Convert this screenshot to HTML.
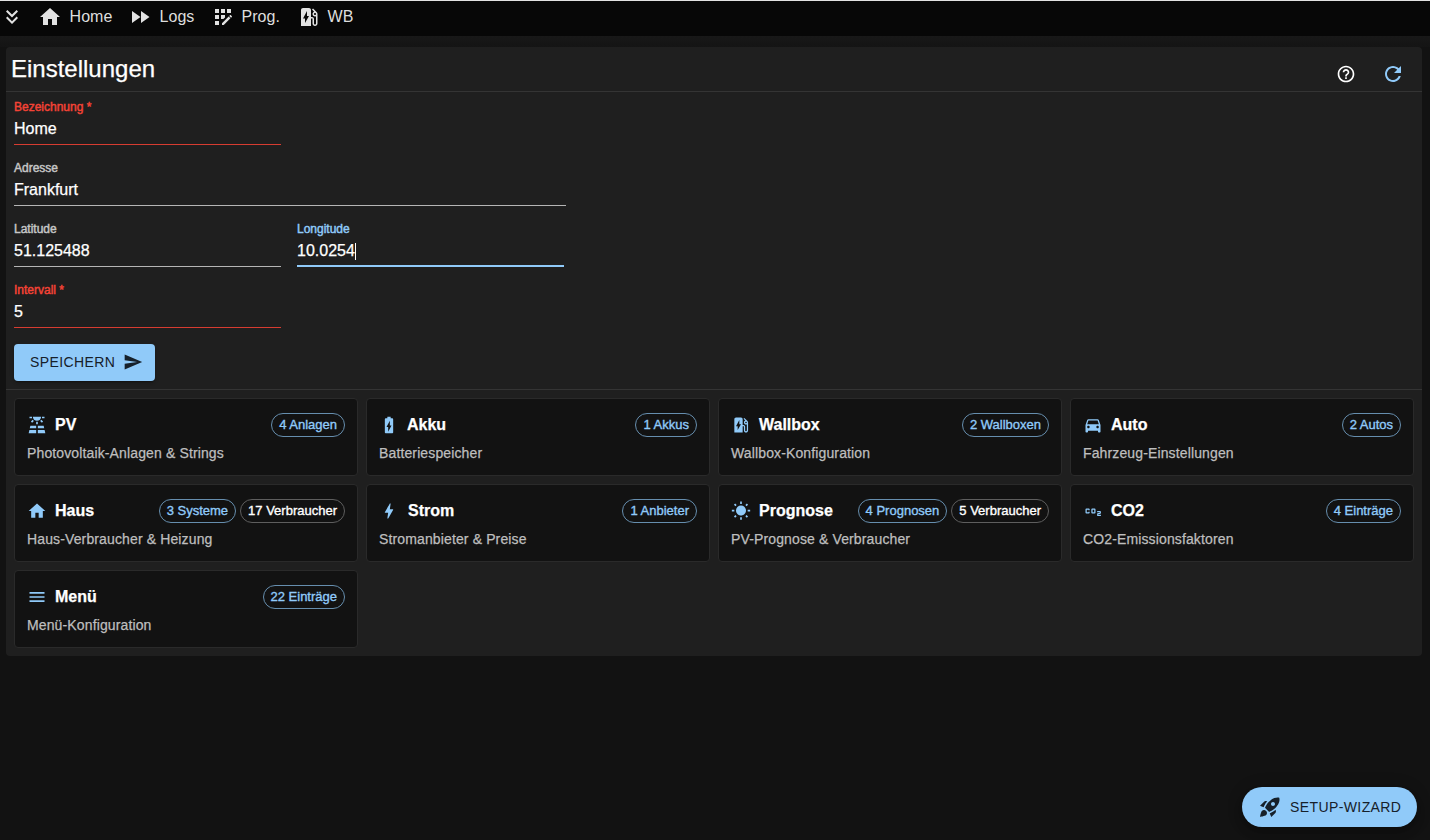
<!DOCTYPE html>
<html lang="de">
<head>
<meta charset="utf-8">
<title>Einstellungen</title>
<style>
*{box-sizing:border-box;margin:0;padding:0}
html,body{width:1430px;height:840px;overflow:hidden}
body{background:#121212;color:#fff;-webkit-text-stroke:.25px currentColor;font-family:"Liberation Sans",Arial,sans-serif;position:relative}
svg{display:block;fill:currentColor}
.abs{position:absolute}
/* nav */
#nav{left:0;top:0;width:1430px;height:36px;background:#070707;border-top:1px solid #e2e2e2}
#strip{left:0;top:36px;width:1430px;height:11px;background:linear-gradient(to bottom,#181818,#141414)}
#nav .ic{position:absolute;top:4px;width:24px;height:24px;color:#e2e2e2}
#nav .tx{position:absolute;top:7px;-webkit-text-stroke:0;margin-left:.6px;font-size:16px;line-height:18px;color:#dedede;white-space:nowrap}
/* panel */
#panel{left:6px;top:47px;width:1416px;height:609px;background:#1f1f1f;border-radius:4px}
h1{position:absolute;left:5px;top:8px;font-size:24px;font-weight:400;line-height:28px;color:#fff;white-space:nowrap}
.hr{position:absolute;left:0;width:1416px;height:1px;background:#343434}
.lbl{position:absolute;-webkit-text-stroke:.45px currentColor;font-size:12px;line-height:14px;color:#c6c6c6;white-space:nowrap}
.val{position:absolute;font-size:16px;line-height:18px;color:#fff;white-space:nowrap}
.ul{position:absolute;height:1px;background:#b5b5b5}
.err{color:#f44336}
.ul.err{background:#d63c31}
.foc{color:#90caf9}
.ul.foc{background:#90caf9;height:2px}
#save{left:8px;top:297px;width:141px;height:37px;background:#90caf9;border-radius:4px;color:#16202a;box-shadow:0 3px 1px -2px rgba(0,0,0,.2),0 2px 2px 0 rgba(0,0,0,.14),0 1px 5px 0 rgba(0,0,0,.12)}
#save span{-webkit-text-stroke:0;position:absolute;left:16px;top:10px;font-size:14px;line-height:16px;letter-spacing:.4px;white-space:nowrap}
#save svg{position:absolute;left:109px;top:8px;width:20px;height:20px}
/* cards */
.card{position:absolute;width:344px;height:78px;background:#121212;border:1px solid #2a2a2a;border-radius:4px}
.card .ci{position:absolute;left:12px;top:16px;width:20px;height:20px;color:#90caf9}
.card .ct{position:absolute;left:40px;top:16px;font-size:16px;font-weight:700;line-height:20px;color:#fff;white-space:nowrap}
.card .cd{position:absolute;left:12px;top:46px;font-size:14px;letter-spacing:.13px;line-height:16px;color:#bebebe;white-space:nowrap}
.chips{position:absolute;right:12px;top:14px;display:flex;gap:4px}
.chip{height:24px;border:1px solid #668eae;-webkit-text-stroke:.35px currentColor;border-radius:12px;padding:0 7px;font-size:13px;line-height:22px;color:#90caf9;white-space:nowrap}
.chip.w{border-color:#5e5e5e;color:#fff}
/* fab */
#fab{left:1242px;top:787px;width:175px;height:40px;background:#90caf9;border-radius:20px;color:#16202a;box-shadow:0 3px 5px -1px rgba(0,0,0,.2),0 6px 10px 0 rgba(0,0,0,.14),0 1px 18px 0 rgba(0,0,0,.12)}
#fab svg{position:absolute;left:16px;top:8px;width:24px;height:24px}
#fab span{-webkit-text-stroke:0;position:absolute;left:48px;top:12px;font-size:14px;line-height:16px;letter-spacing:.4px;white-space:nowrap}
</style>
</head>
<body>
<div id="nav" class="abs">
  <svg class="ic" style="left:0" viewBox="0 0 24 24"><path d="M18 6.41 16.59 5 12 9.58 7.41 5 6 6.41l6 6z"/><path d="m18 13-1.41-1.41L12 16.17l-4.59-4.58L6 13l6 6z"/></svg>
  <svg class="ic" style="left:38px" viewBox="0 0 24 24"><path d="M10 20v-6h4v6h5v-8h3L12 3 2 12h3v8z"/></svg>
  <span class="tx" style="left:69px">Home</span>
  <svg class="ic" style="left:128px" viewBox="0 0 24 24"><path d="M4 18l8.500-6L4 6v12zm9-12v12l8.500-6L13 6z"/></svg>
  <span class="tx" style="left:159px">Logs</span>
  <svg class="ic" style="left:211px" viewBox="0 0 24 24"><path d="M10 4h4v4h-4zM4 16h4v4H4zm0-6h4v4H4zm0-6h4v4H4zm10 8.420V10h-4v4h2.420zm6.880-1.130-1.170-1.170c-.16-.16-.42-.16-.58 0l-.88.88L20 12.760l.88-.88c.16-.16.16-.42 0-.59zM11 18.250V20h1.750l6.670-6.660-1.750-1.760zM16 4h4v4h-4z"/></svg>
  <span class="tx" style="left:241px">Prog.</span>
  <svg class="ic" style="left:297px" viewBox="0 0 24 24"><path d="M19.770 7.230l.01-.01-3.720-3.720L15 4.560l2.110 2.110c-.94.36-1.610 1.260-1.610 2.330 0 1.380 1.120 2.500 2.500 2.500.36 0 .69-.08 1-.21v7.210c0 .55-.45 1-1 1s-1-.45-1-1V14c0-1.100-.9-2-2-2h-1V5c0-1.100-.9-2-2-2H6c-1.100 0-2 .9-2 2v16h10v-7.500h1.500v5c0 1.380 1.120 2.500 2.500 2.500s2.500-1.120 2.500-2.500V9c0-.69-.28-1.320-.73-1.770zM18 10c-.55 0-1-.45-1-1s.45-1 1-1 1 .45 1 1-.45 1-1 1zM8 18v-4.500H6L10 6v5h2l-4 7z"/></svg>
  <span class="tx" style="left:327px">WB</span>
</div>
<div id="strip" class="abs"></div>

<div id="panel" class="abs">
  <h1>Einstellungen</h1>
  <svg class="abs" style="left:1330px;top:17px;width:20px;height:20px;color:#fff" viewBox="0 0 24 24"><path d="M11 18h2v-2h-2v2zm1-16C6.480 2 2 6.480 2 12s4.480 10 10 10 10-4.480 10-10S17.520 2 12 2zm0 18c-4.410 0-8-3.590-8-8s3.590-8 8-8 8 3.590 8 8-3.590 8-8 8zm0-14c-2.210 0-4 1.790-4 4h2c0-1.100.9-2 2-2s2 .9 2 2c0 2-3 1.750-3 5h2c0-2.250 3-2.500 3-5 0-2.210-1.790-4-4-4z"/></svg>
  <svg class="abs" style="left:1375px;top:15px;width:24px;height:24px;color:#90caf9" viewBox="0 0 24 24"><path d="M17.650 6.350C16.200 4.900 14.210 4 12 4c-4.420 0-7.990 3.580-7.990 8s3.570 8 7.990 8c3.730 0 6.840-2.550 7.730-6h-2.080c-.82 2.330-3.040 4-5.650 4-3.310 0-6-2.690-6-6s2.690-6 6-6c1.660 0 3.140.69 4.220 1.780L13 11h7V4l-2.350 2.350z"/></svg>
  <div class="hr" style="top:44px"></div>

  <span class="lbl err" style="left:8px;top:53px">Bezeichnung *</span>
  <span class="val" style="left:8px;top:73px">Home</span>
  <div class="ul err" style="left:8px;top:97px;width:267px"></div>

  <span class="lbl" style="left:8px;top:114px">Adresse</span>
  <span class="val" style="left:8px;top:134px">Frankfurt</span>
  <div class="ul" style="left:8px;top:158px;width:552px"></div>

  <span class="lbl" style="left:8px;top:175px">Latitude</span>
  <span class="val" style="left:8px;top:195px">51.125488</span>
  <div class="ul" style="left:8px;top:219px;width:267px"></div>

  <span class="lbl foc" style="left:291px;top:175px">Longitude</span>
  <span class="val" style="left:291px;top:195px">10.0254</span>
  <div class="abs" style="left:349px;top:196px;width:1px;height:17px;background:#fff"></div>
  <div class="ul foc" style="left:291px;top:218px;width:267px"></div>

  <span class="lbl err" style="left:8px;top:236px">Intervall *</span>
  <span class="val" style="left:8px;top:256px">5</span>
  <div class="ul err" style="left:8px;top:280px;width:267px"></div>

  <div id="save" class="abs"><span>SPEICHERN</span><svg viewBox="0 0 24 24"><path d="M2.010 21L23 12 2.010 3 2 10l15 2-15 2z"/></svg></div>
  <div class="hr" style="top:342px"></div>

  <!-- row 1 -->
  <div class="card" style="left:8px;top:351px">
    <svg class="ci" viewBox="0 0 24 24"><path d="M3.330 16H11v-3H4l-.67 3zM13 16h7.670L20 13h-7v3zm8.110 2H13v4h9l-.89-4zM2 22h9v-4H2.890L2 22zm9-14h2v3h-2zm4.760-.79 1.420-1.420 2.120 2.120-1.420 1.420zm-11.050.71 2.120-2.120 1.420 1.420-2.120 2.120zM3 2h3v2H3zm15 0h3v2h-3zm-6 5c2.760 0 5-2.240 5-5H7c0 2.760 2.240 5 5 5z"/></svg>
    <span class="ct">PV</span><span class="cd">Photovoltaik-Anlagen &amp; Strings</span>
    <div class="chips"><span class="chip">4 Anlagen</span></div>
  </div>
  <div class="card" style="left:360px;top:351px">
    <svg class="ci" viewBox="0 0 24 24"><path d="M15.670 4H14V2h-4v2H8.330C7.600 4 7 4.600 7 5.330v15.330C7 21.400 7.600 22 8.330 22h7.330c.74 0 1.340-.6 1.340-1.330V5.330C17 4.600 16.400 4 15.670 4zM11 20v-5.500H9L13 7v5.500h2L11 20z"/></svg>
    <span class="ct">Akku</span><span class="cd">Batteriespeicher</span>
    <div class="chips"><span class="chip">1 Akkus</span></div>
  </div>
  <div class="card" style="left:712px;top:351px">
    <svg class="ci" viewBox="0 0 24 24"><path d="M19.770 7.230l.01-.01-3.720-3.720L15 4.560l2.110 2.110c-.94.36-1.610 1.260-1.610 2.330 0 1.380 1.120 2.500 2.500 2.500.36 0 .69-.08 1-.21v7.210c0 .55-.45 1-1 1s-1-.45-1-1V14c0-1.100-.9-2-2-2h-1V5c0-1.100-.9-2-2-2H6c-1.100 0-2 .9-2 2v16h10v-7.500h1.500v5c0 1.380 1.120 2.500 2.500 2.500s2.500-1.120 2.500-2.500V9c0-.69-.28-1.320-.73-1.770zM18 10c-.55 0-1-.45-1-1s.45-1 1-1 1 .45 1 1-.45 1-1 1zM8 18v-4.500H6L10 6v5h2l-4 7z"/></svg>
    <span class="ct">Wallbox</span><span class="cd">Wallbox-Konfiguration</span>
    <div class="chips"><span class="chip">2 Wallboxen</span></div>
  </div>
  <div class="card" style="left:1064px;top:351px">
    <svg class="ci" viewBox="0 0 24 24"><path d="M18.920 6.010C18.720 5.420 18.160 5 17.500 5h-11c-.66 0-1.210.42-1.420 1.010L3 12v8c0 .55.45 1 1 1h1c.55 0 1-.45 1-1v-1h12v1c0 .55.45 1 1 1h1c.55 0 1-.45 1-1v-8l-2.080-5.990zM6.500 16c-.83 0-1.500-.67-1.500-1.500S5.670 13 6.500 13s1.500.67 1.500 1.500S7.330 16 6.500 16zm11 0c-.83 0-1.500-.67-1.500-1.500s.67-1.500 1.500-1.500 1.500.67 1.500 1.500-.67 1.500-1.500 1.500zM5 11l1.500-4.500h11L19 11H5z"/></svg>
    <span class="ct">Auto</span><span class="cd">Fahrzeug-Einstellungen</span>
    <div class="chips"><span class="chip">2 Autos</span></div>
  </div>
  <!-- row 2 -->
  <div class="card" style="left:8px;top:437px">
    <svg class="ci" viewBox="0 0 24 24"><path d="M10 20v-6h4v6h5v-8h3L12 3 2 12h3v8z"/></svg>
    <span class="ct">Haus</span><span class="cd">Haus-Verbraucher &amp; Heizung</span>
    <div class="chips"><span class="chip">3 Systeme</span><span class="chip w">17 Verbraucher</span></div>
  </div>
  <div class="card" style="left:360px;top:437px">
    <svg class="ci" viewBox="0 0 24 24"><path d="M11 21h-1l1-7H7.500c-.58 0-.57-.32-.38-.66.19-.34.05-.08.07-.12C8.480 10.940 10.420 7.540 13 3h1l-1 7h3.500c.49 0 .56.33.47.51l-.07.15C12.960 17.550 11 21 11 21z"/></svg>
    <span class="ct" style="left:41px">Strom</span><span class="cd">Stromanbieter &amp; Preise</span>
    <div class="chips"><span class="chip">1 Anbieter</span></div>
  </div>
  <div class="card" style="left:712px;top:437px">
    <svg class="ci" viewBox="0 0 24 24"><path d="M6.760 4.840l-1.800-1.790-1.410 1.410 1.790 1.790 1.420-1.410zM4 10.500H1v2h3v-2zm9-9.950h-2V3.500h2V.55zm7.450 3.910l-1.410-1.410-1.790 1.790 1.410 1.410 1.790-1.790zm-3.210 13.700l1.790 1.800 1.410-1.410-1.800-1.790-1.400 1.400zM20 10.500v2h3v-2h-3zm-8-5c-3.310 0-6 2.690-6 6s2.690 6 6 6 6-2.690 6-6-2.690-6-6-6zm-1 16.950h2V19.500h-2v2.950zm-7.450-3.910l1.410 1.410 1.790-1.800-1.410-1.410-1.790 1.800z"/></svg>
    <span class="ct">Prognose</span><span class="cd">PV-Prognose &amp; Verbraucher</span>
    <div class="chips"><span class="chip">4 Prognosen</span><span class="chip w">5 Verbraucher</span></div>
  </div>
  <div class="card" style="left:1064px;top:437px">
    <svg class="ci" viewBox="0 0 24 24"><path d="M14 9h-3c-.55 0-1 .45-1 1v4c0 .55.45 1 1 1h3c.55 0 1-.45 1-1v-4c0-.55-.45-1-1-1zm-.5 4.500h-2v-3h2v3zM8 13v1c0 .55-.45 1-1 1H4c-.55 0-1-.45-1-1v-4c0-.55.45-1 1-1h3c.55 0 1 .45 1 1v1H6.500v-.5h-2v3h2V13H8zm12.500 2.500h-2v1h3V18H17v-2.500c0-.55.45-1 1-1h2v-1h-3V12h3.500c.55 0 1 .45 1 1v1.500c0 .55-.45 1-1 1z"/></svg>
    <span class="ct">CO2</span><span class="cd">CO2-Emissionsfaktoren</span>
    <div class="chips"><span class="chip">4 Einträge</span></div>
  </div>
  <!-- row 3 -->
  <div class="card" style="left:8px;top:523px">
    <svg class="ci" viewBox="0 0 24 24"><path d="M3 18h18v-2H3v2zm0-5h18v-2H3v2zm0-7v2h18V6H3z"/></svg>
    <span class="ct">Menü</span><span class="cd">Menü-Konfiguration</span>
    <div class="chips"><span class="chip">22 Einträge</span></div>
  </div>
</div>

<div id="fab" class="abs">
  <svg viewBox="0 0 24 24"><path d="M9.190 6.350c-2.040 2.290-3.440 5.580-3.570 5.890L2 10.690l4.050-4.050c.47-.47 1.150-.68 1.810-.55l1.330.26zM11.170 17s3.740-1.550 5.890-3.700c5.400-5.400 4.500-9.620 4.210-10.570-.95-.3-5.170-1.190-10.570 4.210C8.550 9.090 7 12.830 7 12.830L11.170 17zm6.480-2.190c-2.290 2.040-5.580 3.440-5.890 3.570L13.310 22l4.050-4.050c.47-.47.68-1.150.55-1.810l-.26-1.330zM9 18c0 .83-.34 1.580-.88 2.120C6.940 21.300 2 22 2 22s.7-4.940 1.880-6.120C4.420 15.340 5.170 15 6 15c1.660 0 3 1.340 3 3zm4-9c0-1.100.9-2 2-2s2 .9 2 2-.9 2-2 2-2-.9-2-2z"/></svg>
  <span>SETUP-WIZARD</span>
</div>
</body>
</html>
